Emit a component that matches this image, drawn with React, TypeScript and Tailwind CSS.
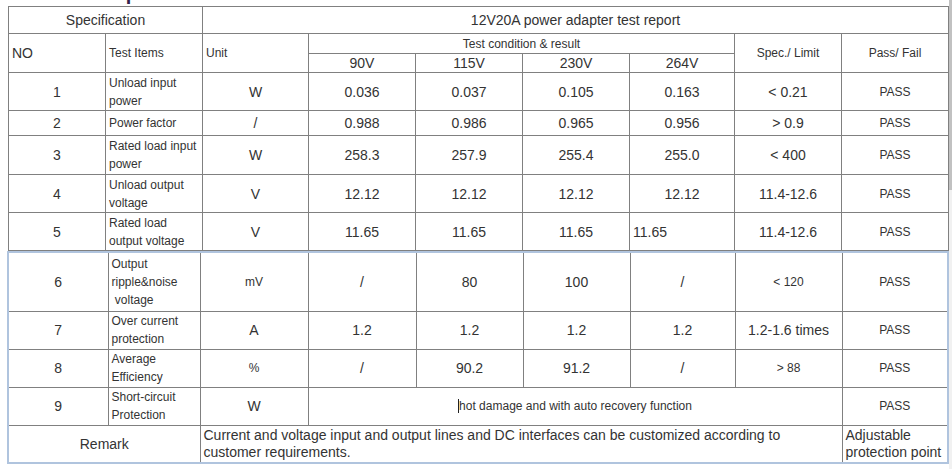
import React from "react";

const grid = "border border-[#808080]";
const c = `${grid} text-center align-middle px-[3px] leading-[16px]`;
const l = `${grid} text-left align-middle px-[3px] leading-[16px]`;

type Row = {
  no: string;
  item: React.ReactNode;
  unit: string;
  unitSm?: boolean;
  vals: string[];
  lastLeft?: boolean;
  spec: string;
  specSm?: boolean;
  h: string;
};

const topRows: Row[] = [
  { no: "1", item: <>Unload input<br />power</>, unit: "W", vals: ["0.036", "0.037", "0.105", "0.163"], spec: "< 0.21", h: "h-[38px]" },
  { no: "2", item: "Power factor", unit: "/", vals: ["0.988", "0.986", "0.965", "0.956"], spec: "> 0.9", h: "h-[25px]" },
  { no: "3", item: <>Rated load input<br />power</>, unit: "W", vals: ["258.3", "257.9", "255.4", "255.0"], spec: "< 400", h: "h-[39px]" },
  { no: "4", item: <>Unload output<br />voltage</>, unit: "V", vals: ["12.12", "12.12", "12.12", "12.12"], spec: "11.4-12.6", h: "h-[38px]" },
  { no: "5", item: <>Rated load<br />output voltage</>, unit: "V", vals: ["11.65", "11.65", "11.65", "11.65"], lastLeft: true, spec: "11.4-12.6", h: "h-[38px]" },
];

const bottomRows: Row[] = [
  { no: "6", item: <>Output<br />ripple&amp;noise<br />&nbsp;voltage</>, unit: "mV", unitSm: true, vals: ["/", "80", "100", "/"], spec: "< 120", specSm: true, h: "h-[59px]" },
  { no: "7", item: <>Over current<br />protection</>, unit: "A", vals: ["1.2", "1.2", "1.2", "1.2"], spec: "1.2-1.6 times", h: "h-[38px]" },
  { no: "8", item: <>Average<br />Efficiency</>, unit: "%", unitSm: true, vals: ["/", "90.2", "91.2", "/"], spec: "> 88", specSm: true, h: "h-[38px]" },
];

const DataRow = ({ r }: { r: Row }) => (
  <tr className={r.h}>
    <td className={`${c} text-[14px]`}>{r.no}</td>
    <td className={`${l} text-[12px] !leading-[18px]`}>{r.item}</td>
    <td className={`${c} ${r.unitSm ? "text-[12px]" : "text-[14px]"}`}>{r.unit}</td>
    {r.vals.map((v, i) => (
      <td key={i} className={`${r.lastLeft && i === 3 ? l : c} text-[14px]`}>
        {v}
      </td>
    ))}
    <td className={`${c} ${r.specSm ? "text-[12px]" : "text-[14px]"}`}>{r.spec}</td>
    <td className={`${c} text-[12px]`}>PASS</td>
  </tr>
);

export default function App() {
  return (
    <div
      className="relative w-[952px] h-[469px] overflow-hidden bg-white text-[#333]"
      style={{ fontFamily: '"Liberation Sans", Arial, sans-serif' }}
    >
      {/* heading cut off at the top edge */}
      <div className="h-[6px] overflow-hidden">
        <div className="mt-[-17px] pl-[55px] text-[20px] leading-[20px] font-bold text-[#33224d]">
          Test Report
        </div>
      </div>

      <table className="ml-[8px] w-[940px] border-collapse table-fixed">
        <colgroup>
          <col className="w-[97px]" />
          <col className="w-[97px]" />
          <col className="w-[106px]" />
          <col className="w-[107px]" />
          <col className="w-[107px]" />
          <col className="w-[107px]" />
          <col className="w-[105px]" />
          <col className="w-[107px]" />
          <col className="w-[107px]" />
        </colgroup>
        <tbody>
          <tr className="h-[27px]">
            <td colSpan={2} className={`${c} text-[14px]`}>Specification</td>
            <td colSpan={7} className={`${c} text-[14px]`}>12V20A power adapter test report</td>
          </tr>
          <tr className="h-[20px]">
            <td rowSpan={2} className={`${l} text-[14px]`}>NO</td>
            <td rowSpan={2} className={`${l} text-[12px]`}>Test Items</td>
            <td rowSpan={2} className={`${l} text-[12px]`}>Unit</td>
            <td colSpan={4} className={`${c} text-[12px]`}>Test condition &amp; result</td>
            <td rowSpan={2} className={`${c} text-[12px]`}>Spec./ Limit</td>
            <td rowSpan={2} className={`${c} text-[12px]`}>Pass/ Fail</td>
          </tr>
          <tr className="h-[19px]">
            <td className={`${c} text-[14px]`}>90V</td>
            <td className={`${c} text-[14px]`}>115V</td>
            <td className={`${c} text-[14px]`}>230V</td>
            <td className={`${c} text-[14px]`}>264V</td>
          </tr>
          {topRows.map((r) => (
            <DataRow key={r.no} r={r} />
          ))}
        </tbody>
      </table>

      <table className="ml-[7px] w-[940px] border-collapse table-fixed border-2 border-[#b0c4de]">
        <colgroup>
          <col className="w-[100px]" />
          <col className="w-[92px]" />
          <col className="w-[108px]" />
          <col className="w-[108px]" />
          <col className="w-[107px]" />
          <col className="w-[107px]" />
          <col className="w-[105px]" />
          <col className="w-[107px]" />
          <col className="w-[106px]" />
        </colgroup>
        <tbody>
          {bottomRows.map((r) => (
            <DataRow key={r.no} r={r} />
          ))}
          <tr className="h-[38px]">
            <td className={`${c} text-[14px]`}>9</td>
            <td className={`${l} text-[12px] !leading-[18px]`}>
              Short-circuit
              <br />
              Protection
            </td>
            <td className={`${c} text-[14px]`}>W</td>
            <td colSpan={5} className={`${c} text-[12px]`}>
              <span className="border-l border-[#222]">hot damage and with auto recovery function</span>
            </td>
            <td className={`${c} text-[12px]`}>PASS</td>
          </tr>
          <tr className="h-[38px]">
            <td colSpan={2} className={`${c} text-[14px]`}>Remark</td>
            <td colSpan={6} className={`${l} text-[14px] !leading-[17px]`}>
              Current and voltage input and output lines and DC interfaces can be customized according to
              <br />
              customer requirements.
            </td>
            <td className={`${l} text-[14px] !leading-[17px]`}>
              Adjustable
              <br />
              protection point
            </td>
          </tr>
        </tbody>
      </table>

      {/* browser scrollbar on the right edge */}
      <div className="absolute right-0 top-0 h-full w-[3px] bg-[#f1f1f1]">
        <div className="h-[190px] w-full bg-[#c1c1c1]" />
      </div>
    </div>
  );
}
